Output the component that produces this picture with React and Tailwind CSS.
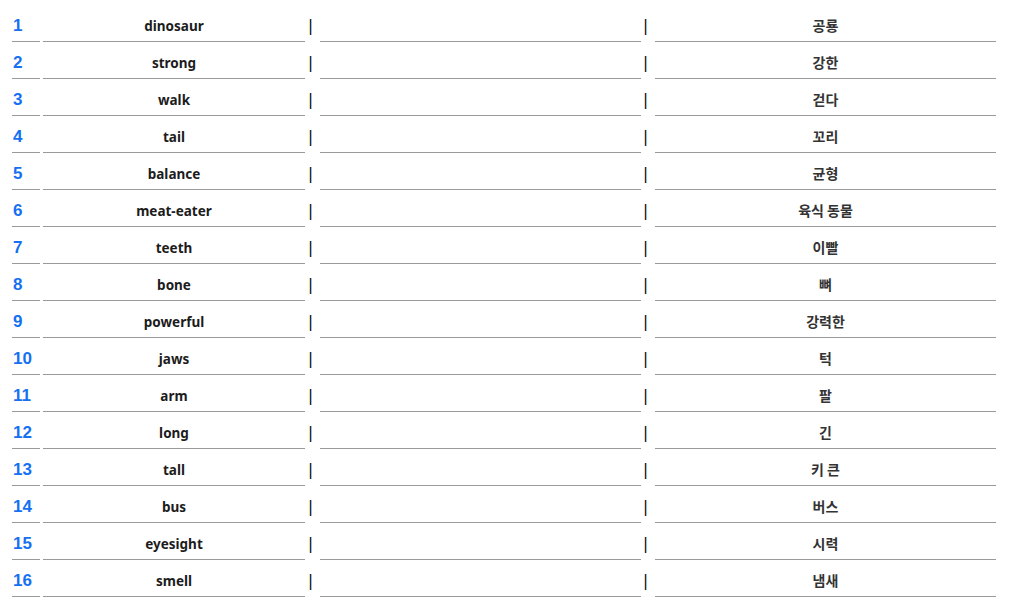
const rows = [
  ["dinosaur", "공룡"],
  ["strong", "강한"],
  ["walk", "걷다"],
  ["tail", "꼬리"],
  ["balance", "균형"],
  ["meat-eater", "육식 동물"],
  ["teeth", "이빨"],
  ["bone", "뼈"],
  ["powerful", "강력한"],
  ["jaws", "턱"],
  ["arm", "팔"],
  ["long", "긴"],
  ["tall", "키 큰"],
  ["bus", "버스"],
  ["eyesight", "시력"],
  ["smell", "냄새"],
];

export default function App() {
  return (
    <div className="w-[1012px] h-[600px] bg-white pt-[12px] pl-[12px] overflow-hidden">
      <div className="flex flex-col gap-[7px]">
        {rows.map(([en, ko], i) => (
          <div key={i} className="flex h-[30px]">
            <div className="w-[28px] border-b border-[#9a9a9a] flex items-center pl-[1px] pb-[2px] text-[17px] font-bold text-[#1670f2] leading-none" style={{ fontFamily: '"Liberation Sans", Arial, sans-serif' }}>
              {i + 1}
            </div>
            <div className="w-[3px]" />
            <div className="w-[262px] border-b border-[#9a9a9a] flex items-center justify-center pb-[1px] text-[13.5px] font-bold text-[#1c1c1c]" style={{ fontFamily: '"Noto Sans", "Noto Sans CJK KR", sans-serif' }}>
              {en}
            </div>
            <div className="w-[15px] flex items-center pl-[3px] pb-[1px] text-[15px] text-black" style={{ fontFamily: '"DejaVu Sans", sans-serif' }}>
              |
            </div>
            <div className="w-[321px] border-b border-[#9a9a9a]" />
            <div className="w-[14px] flex items-center pl-[2px] pb-[1px] text-[15px] text-black" style={{ fontFamily: '"DejaVu Sans", sans-serif' }}>
              |
            </div>
            <div className="w-[341px] border-b border-[#9a9a9a] flex items-center justify-center pb-[3px] text-[14px] font-bold text-[#333]" style={{ fontFamily: '"Noto Sans CJK KR", "Noto Sans", sans-serif' }}>
              {ko}
            </div>
          </div>
        ))}
      </div>
    </div>
  );
}
